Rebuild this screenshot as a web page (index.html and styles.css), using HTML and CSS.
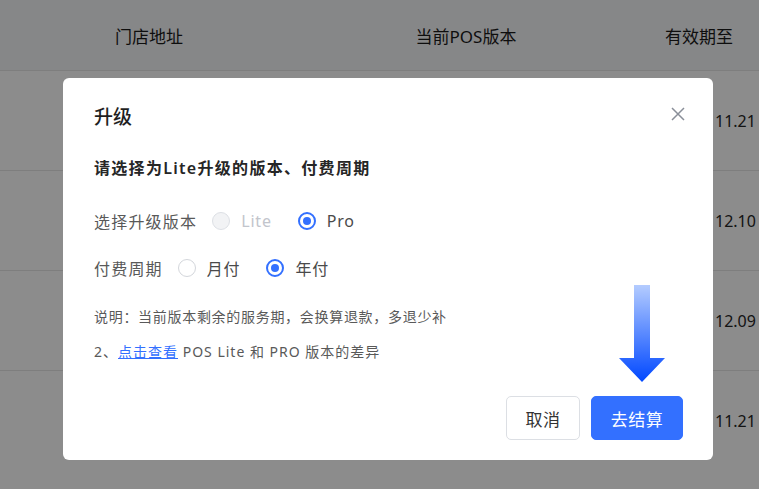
FILE: index.html
```html
<!DOCTYPE html>
<html lang="zh-CN">

<head>
  <meta charset="utf-8">
  <link rel="stylesheet" href="styles.css">
</head>

<body>
  <div class="storeTable">
    <div class="thead">
      <div class="cell colAddr">门店地址</div>
      <div class="cell colVer">当前POS版本</div>
      <div class="cell colDate">有效期至</div>
    </div>
    <div class="trow">
      <div class="cell colAddr"></div>
      <div class="cell colVer"></div>
      <div class="cell colDate">11.21</div>
    </div>
    <div class="trow">
      <div class="cell colAddr"></div>
      <div class="cell colVer"></div>
      <div class="cell colDate">12.10</div>
    </div>
    <div class="trow">
      <div class="cell colAddr"></div>
      <div class="cell colVer"></div>
      <div class="cell colDate">12.09</div>
    </div>
    <div class="trow">
      <div class="cell colAddr"></div>
      <div class="cell colVer"></div>
      <div class="cell colDate">11.21</div>
    </div>
  </div>

  <div class="mask"></div>

  <div class="modal">
    <div class="modalTitle">升级</div>
    <span class="closeBtn">
      <svg width="14" height="14" viewBox="0 0 14 14">
        <path d="M1 1 L13 13 M13 1 L1 13" stroke="#8a8f99" stroke-width="1.5" fill="none" />
      </svg>
    </span>

    <div class="subTitle">请选择为Lite升级的版本、付费周期</div>

    <div class="formRow rowVersion">
      <span class="label">选择升级版本</span>
      <span class="radio disabled"><i></i>Lite</span>
      <span class="radio checked"><i></i>Pro</span>
    </div>

    <div class="formRow rowPeriod">
      <span class="label">付费周期</span>
      <span class="radio"><i></i>月付</span>
      <span class="radio checked"><i></i>年付</span>
    </div>

    <p class="note">说明：当前版本剩余的服务期，会换算退款，多退少补</p>
    <p class="note note2">2、<a href="#">点击查看</a> POS Lite 和 PRO 版本的差异</p>

    <div class="footer">
      <button class="btn">取消</button>
      <button class="btn primary">去结算</button>
    </div>

    <svg class="arrow" width="48" height="98" viewBox="0 0 48 98">
      <defs>
        <linearGradient id="arrowFill" x1="0" y1="0" x2="0" y2="1">
          <stop offset="0" stop-color="#b4ccff" />
          <stop offset="1" stop-color="#0047ff" />
        </linearGradient>
      </defs>
      <path d="M16 0 H32 V73 H47 L24 97 L1 73 H16 Z" fill="url(#arrowFill)" />
    </svg>
  </div>
</body>

</html>
```

FILE: styles.css
```css
body {
  margin: 0;
  padding: 0;
  font-family: "Noto Sans", "Noto Sans CJK SC", sans-serif;
  background: #fff;
  color: #262626;
  overflow: hidden;
}

.storeTable {
  width: 100%;
}

.thead,
.trow {
  display: flex;
  align-items: center;
}

.thead {
  height: 70px;
  background: #f5f6f8;
  font-size: 17px;
  color: #1a1a1a;
}

.trow {
  height: 99px;
  border-top: 1px solid #e6e6e6;
  font-size: 16px;
  color: #262626;
}

.cell {
  flex: none;
}

.colAddr {
  width: 298px;
  text-align: center;
}

.colVer {
  width: 336px;
  text-align: center;
}

.colDate {
  width: 125px;
  padding-left: 81px;
  box-sizing: border-box;
  white-space: nowrap;
}

.thead .colDate {
  padding-left: 31px;
}

.mask {
  position: fixed;
  left: 0;
  top: 0;
  right: 0;
  bottom: 0;
  background: rgba(0, 0, 0, 0.45);
}

.modal {
  position: absolute;
  left: 63px;
  top: 78px;
  width: 650px;
  height: 382px;
  box-sizing: border-box;
  padding: 27px 30px 0 31px;
  background: #fff;
  border-radius: 6px;
}

.modalTitle {
  font-size: 19px;
  line-height: 24px;
  font-weight: 500;
  color: #1f1f1f;
}

.closeBtn {
  position: absolute;
  right: 28px;
  top: 29px;
  width: 14px;
  height: 14px;
}

.closeBtn svg {
  display: block;
}

.subTitle {
  margin-top: 28px;
  font-size: 16px;
  line-height: 22px;
  font-weight: 600;
  letter-spacing: 1.3px;
  color: #262626;
}

.formRow {
  display: flex;
  align-items: center;
  height: 24px;
  font-size: 16px;
  color: #595959;
}

.rowVersion {
  margin-top: 30px;
}

.rowPeriod {
  margin-top: 23px;
}

.label {
  letter-spacing: 1.2px;
  margin-right: 15px;
}

.radio {
  display: flex;
  align-items: center;
  margin-right: 26px;
  color: #4a4a4a;
  letter-spacing: 0.8px;
}

.radio i {
  width: 18px;
  height: 18px;
  box-sizing: border-box;
  border: 1px solid #d3d6db;
  border-radius: 50%;
  background: #fff;
  margin-right: 11px;
  position: relative;
}

.radio.disabled {
  color: #c2c5cc;
}

.radio.disabled i {
  background: #f2f3f5;
  border-color: #dde0e5;
}

.radio.checked i {
  border: 2px solid #3370ff;
}

.radio.checked i::after {
  content: "";
  position: absolute;
  left: 3px;
  top: 3px;
  width: 8px;
  height: 8px;
  border-radius: 50%;
  background: #3370ff;
}

.note {
  margin: 27px 0 0;
  font-size: 14px;
  line-height: 20px;
  letter-spacing: 0.7px;
  color: #595959;
}

.note2 {
  margin-top: 15px;
  letter-spacing: 1px;
}

.note a {
  color: #3370ff;
  text-decoration: underline;
}

.footer {
  display: flex;
  justify-content: flex-end;
  gap: 11px;
  margin-top: 34px;
}

.btn {
  height: 44px;
  padding: 0;
  border: 1px solid #dcdfe4;
  border-radius: 5px;
  background: #fff;
  font-family: inherit;
  font-size: 17px;
  color: #333;
  width: 74px;
  letter-spacing: 0.5px;
}

.btn.primary {
  width: 92px;
  border-color: #3370ff;
  background: #3370ff;
  color: #fff;
}

.arrow {
  position: absolute;
  left: 555px;
  top: 207px;
  display: block;
}
```
